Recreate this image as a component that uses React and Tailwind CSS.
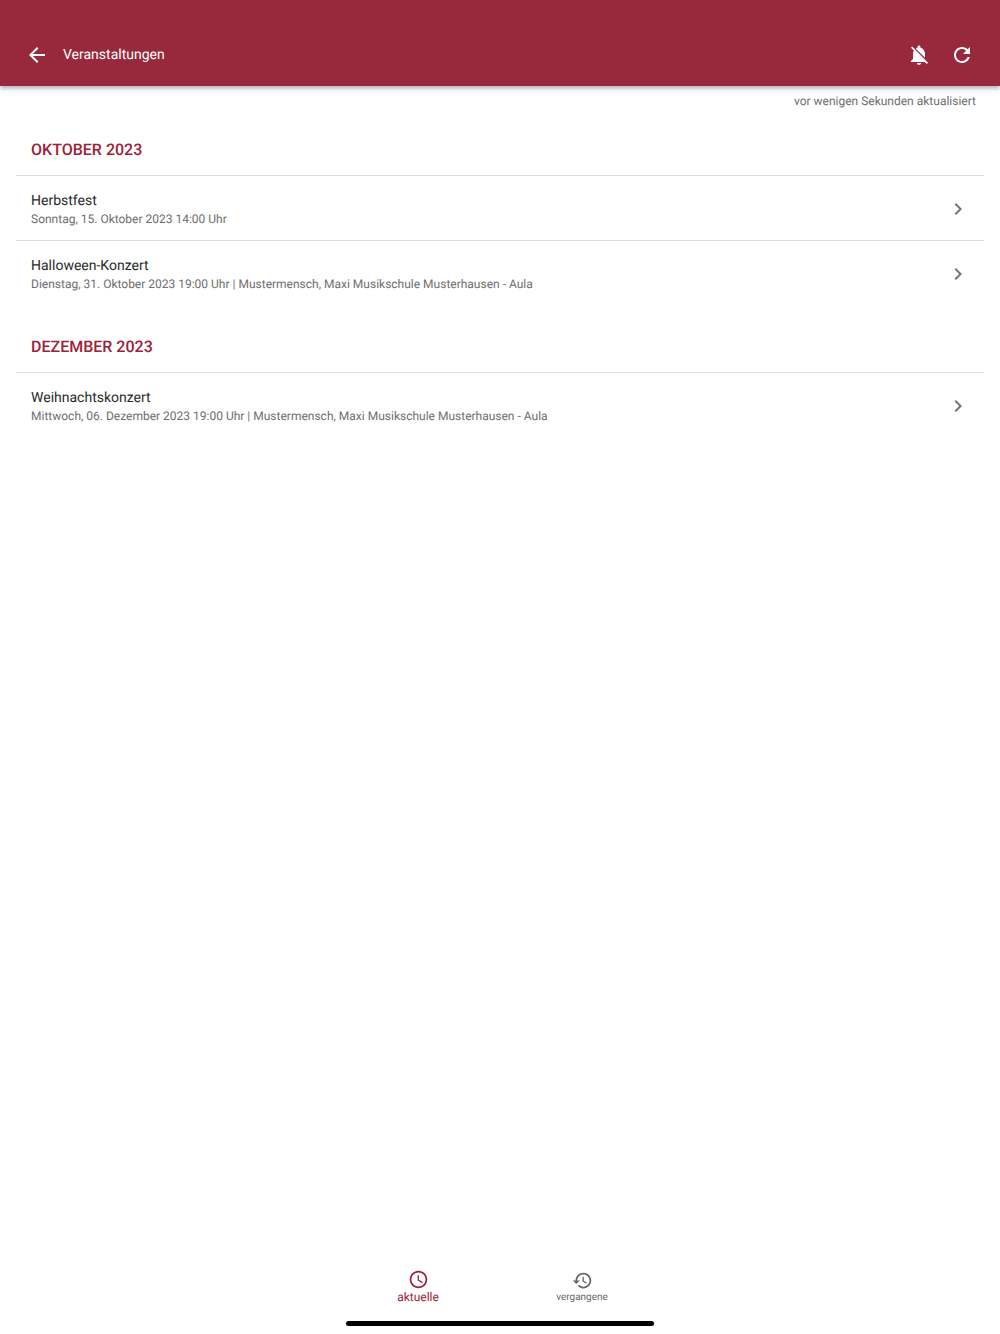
import React from "react";

function Icon({ d, className }) {
  return (
    <svg viewBox="0 0 24 24" fill="currentColor" className={className}>
      <path d={d} />
    </svg>
  );
}

const icons = {
  back: "M20 11H7.83l5.59-5.59L12 4l-8 8 8 8 1.41-1.41L7.83 13H20v-2z",
  bellOff: "M20 18.69L7.84 6.14 5.27 3.49 4 4.76l2.8 2.8v.01c-.52.99-.8 2.16-.8 3.42v5l-2 2v1h13.73l2 2L21 19.72l-1-1.03zM12 22c1.11 0 2-.89 2-2h-4c0 1.11.89 2 2 2zm6-7.32V11c0-3.08-1.64-5.64-4.5-6.32V4c0-.83-.67-1.5-1.5-1.5s-1.5.67-1.5 1.5v.68c-.15.03-.29.08-.42.12-.1.03-.2.07-.3.11h-.01c-.2.08-.4.17-.59.27-.2.1-.4.21-.59.33L18 14.68z",
  refresh: "M17.65 6.35C16.2 4.9 14.21 4 12 4c-4.42 0-7.99 3.58-7.99 8s3.57 8 7.99 8c3.73 0 6.84-2.55 7.73-6h-2.08c-.82 2.33-3.04 4-5.65 4-3.31 0-6-2.69-6-6s2.69-6 6-6c1.66 0 3.14.69 4.22 1.78L13 11h7V4l-2.35 2.35z",
  chevron: "M10 6L8.59 7.41 13.17 12l-4.58 4.59L10 18l6-6z",
  schedule: "M11.99 2C6.47 2 2 6.48 2 12s4.47 10 9.99 10C17.52 22 22 17.52 22 12S17.52 2 11.99 2zM12 20c-4.42 0-8-3.58-8-8s3.58-8 8-8 8 3.58 8 8-3.58 8-8 8zm.5-13H11v6l5.25 3.15.75-1.23-4.5-2.67z",
  history: "M13 3c-4.97 0-9 4.03-9 9H1l3.89 3.89.07.14L9 12H6c0-3.87 3.13-7 7-7s7 3.13 7 7-3.13 7-7 7c-1.93 0-3.68-.79-4.94-2.06l-1.42 1.42C8.27 19.99 10.51 21 13 21c4.97 0 9-4.03 9-9s-4.03-9-9-9zm-1 5v5l4.28 2.54.72-1.21-3.5-2.08V8H12z",
};

const monate = [
  {
    titel: "OKTOBER 2023",
    termine: [
      { name: "Herbstfest", info: "Sonntag, 15. Oktober 2023 14:00 Uhr" },
      { name: "Halloween-Konzert", info: "Dienstag, 31. Oktober 2023 19:00 Uhr | Mustermensch, Maxi Musikschule Musterhausen - Aula" },
    ],
  },
  {
    titel: "DEZEMBER 2023",
    termine: [
      { name: "Weihnachtskonzert", info: "Mittwoch, 06. Dezember 2023 19:00 Uhr | Mustermensch, Maxi Musikschule Musterhausen - Aula" },
    ],
  },
];

function Zeile({ termin }) {
  return (
    <div className="flex h-[65px] items-center justify-between border-t border-[#dedede] pl-[15px] pr-[14px]">
      <div className="pt-[3px]">
        <p className="text-[14px] leading-[20px] text-[#2a2a2a]">{termin.name}</p>
        <p className="mt-[-2px] text-[12px] leading-[20px] text-[#6e6e6e]">{termin.info}</p>
      </div>
      <Icon d={icons.chevron} className="mt-[2px] h-6 w-6 text-[#757575]" />
    </div>
  );
}

export default function App() {
  return (
    <main className="flex h-[1334px] flex-col bg-white font-['Roboto',sans-serif] [text-rendering:geometricPrecision]">
      <header className="flex h-[86px] shrink-0 items-end justify-between bg-[#98283b] pb-[19px] pl-[25px] pr-[26px] text-white shadow-[0_2px_5px_rgba(0,0,0,0.35)]">
        <div className="flex items-center">
          <Icon d={icons.back} className="h-6 w-6" />
          <h1 className="ml-[14px] text-[14px]">Veranstaltungen</h1>
        </div>
        <div className="flex items-center gap-[19px]">
          <Icon d={icons.bellOff} className="h-6 w-6" />
          <Icon d={icons.refresh} className="h-6 w-6" />
        </div>
      </header>

      <p className="mt-[5px] pr-6 text-right text-[12px] leading-[20px] text-[#6e6e6e]">
        vor wenigen Sekunden aktualisiert
      </p>

      <div className="mx-4 flex-1">
        {monate.map((monat, i) => (
          <section key={monat.titel} className={i === 0 ? "mt-[14px]" : "mt-[17px]"}>
            <h2 className="flex h-[50px] items-center pl-[15px] text-[16px] font-medium text-[#9e2139]">
              {monat.titel}
            </h2>
            {monat.termine.map((t) => (
              <Zeile key={t.name} termin={t} />
            ))}
          </section>
        ))}
      </div>

      <nav className="flex h-[56px] shrink-0 justify-center">
        <div className="flex w-[164px] flex-col items-center pt-[4px] text-[#9e2139]">
          <Icon d={icons.schedule} className="h-[21px] w-[21px]" />
          <span className="text-[12px] leading-[15px]">aktuelle</span>
        </div>
        <div className="flex w-[164px] flex-col items-center pt-[5px] text-[#666666]">
          <Icon d={icons.history} className="h-[21px] w-[21px]" />
          <span className="text-[10px] leading-[14px]">vergangene</span>
        </div>
      </nav>
      <div className="flex h-[13px] shrink-0 justify-center">
        <div className="h-[5px] w-[308px] rounded-full bg-black" />
      </div>
    </main>
  );
}
